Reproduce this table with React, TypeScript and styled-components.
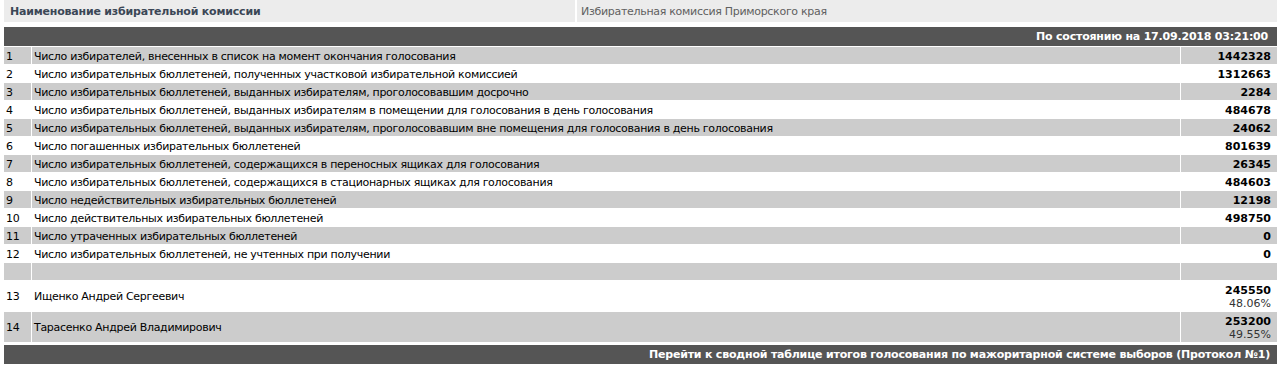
import React from "react";
import styled, { createGlobalStyle } from "styled-components";

const Global = createGlobalStyle`
  html, body { margin: 0; padding: 0; background: #fff; }
  body {
    font-family: "DejaVu Sans", Verdana, sans-serif;
    font-size: 11px;
    letter-spacing: -0.3px;
    color: #000;
  }
`;

const Page = styled.div`
  padding: 0 2px 0 4px;
  width: 1273px;
`;

const HeaderRow = styled.div`
  display: grid;
  grid-template-columns: 571px 700px;
  column-gap: 2px;
  height: 22px;
`;

const HeaderCell = styled.div<{ $title?: boolean }>`
  background: #ececec;
  display: flex;
  align-items: center;
  padding-left: ${(p) => (p.$title ? "6px" : "4px")};
  font-weight: ${(p) => (p.$title ? "bold" : "normal")};
  letter-spacing: ${(p) => (p.$title ? "-0.2px" : "-0.3px")};
  color: ${(p) => (p.$title ? "#3b4756" : "#606060")};
`;

const DarkBar = styled.div<{ $top?: boolean }>`
  background: #555555;
  color: #fff;
  font-weight: bold;
  letter-spacing: -0.2px;
  height: 19px;
  display: flex;
  align-items: center;
  justify-content: flex-end;
  padding-right: ${(p) => (p.$top ? "9px" : "7px")};
  margin-top: ${(p) => (p.$top ? "5px" : "3px")};
`;

const Rows = styled.div`
  display: flex;
  flex-direction: column;
  gap: 1px;
  margin-top: 1px;
`;

const Row = styled.div<{ $gray: boolean; $tall?: boolean }>`
  display: grid;
  grid-template-columns: 27px 1148px 96px;
  column-gap: 1px;
  height: ${(p) => (p.$tall ? "30px" : "17px")};
  background: ${(p) => (p.$gray ? "#cccccc" : "#ffffff")};
  & > div + div {
    box-shadow: -1px 0 0 #ffffff;
  }
`;

const NumCell = styled.div`
  display: flex;
  align-items: center;
  padding-left: 2px;
  padding-top: 1px;
`;

const LabelCell = styled.div`
  display: flex;
  align-items: center;
  padding-left: 2px;
  padding-top: 1px;
`;

const ValueCell = styled.div`
  display: flex;
  flex-direction: column;
  justify-content: center;
  align-items: flex-end;
  padding-right: 6px;
  padding-top: 1px;
`;

const Value = styled.span`
  font-weight: bold;
  letter-spacing: 0;
  line-height: 13px;
`;

const Percent = styled.span`
  line-height: 13px;
  letter-spacing: 0;
  color: #333;
`;

type Item = { n: string; label: string; value?: string; pct?: string };

const items: Item[] = [
  { n: "1", label: "Число избирателей, внесенных в список на момент окончания голосования", value: "1442328" },
  { n: "2", label: "Число избирательных бюллетеней, полученных участковой избирательной комиссией", value: "1312663" },
  { n: "3", label: "Число избирательных бюллетеней, выданных избирателям, проголосовавшим досрочно", value: "2284" },
  { n: "4", label: "Число избирательных бюллетеней, выданных избирателям в помещении для голосования в день голосования", value: "484678" },
  { n: "5", label: "Число избирательных бюллетеней, выданных избирателям, проголосовавшим вне помещения для голосования в день голосования", value: "24062" },
  { n: "6", label: "Число погашенных избирательных бюллетеней", value: "801639" },
  { n: "7", label: "Число избирательных бюллетеней, содержащихся в переносных ящиках для голосования", value: "26345" },
  { n: "8", label: "Число избирательных бюллетеней, содержащихся в стационарных ящиках для голосования", value: "484603" },
  { n: "9", label: "Число недействительных избирательных бюллетеней", value: "12198" },
  { n: "10", label: "Число действительных избирательных бюллетеней", value: "498750" },
  { n: "11", label: "Число утраченных избирательных бюллетеней", value: "0" },
  { n: "12", label: "Число избирательных бюллетеней, не учтенных при получении", value: "0" },
  { n: "", label: "" },
  { n: "13", label: "Ищенко Андрей Сергеевич", value: "245550", pct: "48.06%" },
  { n: "14", label: "Тарасенко Андрей Владимирович", value: "253200", pct: "49.55%" },
];

export default function App() {
  return (
    <>
      <Global />
      <Page>
        <HeaderRow>
          <HeaderCell $title>Наименование избирательной комиссии</HeaderCell>
          <HeaderCell>Избирательная комиссия Приморского края</HeaderCell>
        </HeaderRow>
        <DarkBar $top>По состоянию на 17.09.2018 03:21:00</DarkBar>
        <Rows>
          {items.map((it, i) => (
            <Row key={i} $gray={i % 2 === 0} $tall={!!it.pct}>
              <NumCell>{it.n}</NumCell>
              <LabelCell>{it.label}</LabelCell>
              <ValueCell>
                {it.value && <Value>{it.value}</Value>}
                {it.pct && <Percent>{it.pct}</Percent>}
              </ValueCell>
            </Row>
          ))}
        </Rows>
        <DarkBar>Перейти к сводной таблице итогов голосования по мажоритарной системе выборов (Протокол №1)</DarkBar>
      </Page>
    </>
  );
}
